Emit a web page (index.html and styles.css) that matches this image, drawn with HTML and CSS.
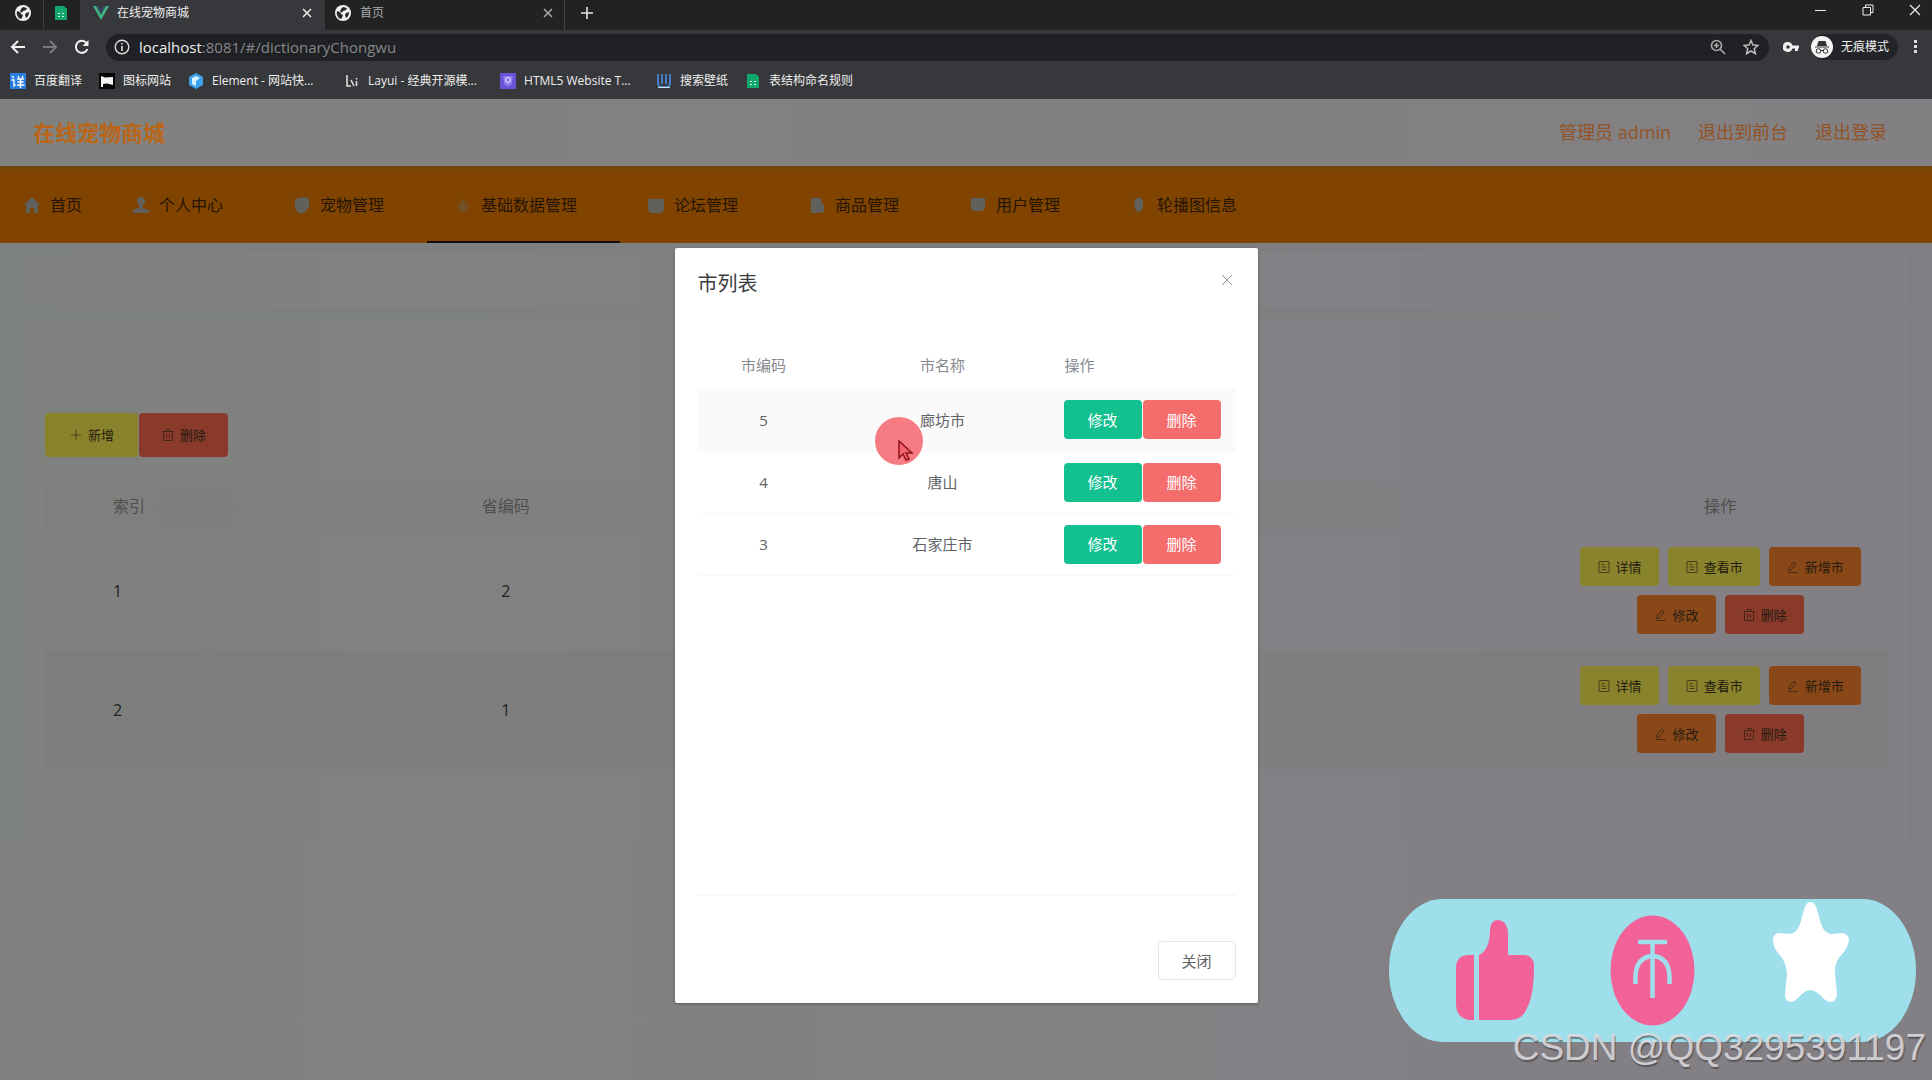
FILE: index.html
```html
<!DOCTYPE html>
<html lang="zh-CN">
<head>
<meta charset="utf-8">
<title>在线宠物商城</title>
<link rel="stylesheet" href="styles.css">
</head>
<body>
<svg class="defs" width="0" height="0" aria-hidden="true">
  <symbol id="globe" viewBox="0 0 16 16"><circle cx="8" cy="8" r="8" fill="#f1f1f1"/><path d="M2 6l3 1 1 2 2 1-1 3-2 1C3 12 1 10 2 6zM8 2l4 1-1 2-3 1-1 2-2-2 1-2zM11 8l3-1c0 3-1 5-3 6l-1-3z" fill="#26282a"/></symbol>
  <symbol id="sheet" viewBox="0 0 16 16"><path d="M2 1h9l3 3v11H2z" fill="#12a76c"/><path d="M5 8h2v1H5zM9 8h2v1H9zM5 11h2v1H5zM9 11h2v1H9z" fill="#d9f5e8"/></symbol>
  <symbol id="cross" viewBox="0 0 10 10"><path d="M1 1l8 8M9 1L1 9" fill="none" stroke="currentColor" stroke-width="1.5"/></symbol>
  <symbol id="thin-cross" viewBox="0 0 12 12"><path d="M1 1l10 10M11 1L1 11" fill="none" stroke="currentColor"/></symbol>
  <symbol id="doc" viewBox="0 0 14 14"><path d="M2 1.500h10v11H2zM4.500 4.500h3M4.500 7h5M4.500 9.500h5" fill="none" stroke="currentColor"/></symbol>
  <symbol id="pen" viewBox="0 0 14 14"><path d="M3 8l5-6 2 2-5 6-2.500.5zM2 12.500h10" fill="none" stroke="currentColor"/></symbol>
  <symbol id="trash" viewBox="0 0 14 14"><path d="M1 3.500h12M5 3V1.500h4V3M2.500 3.500v9h9v-9M5.500 6v4M8.500 6v4" fill="none" stroke="currentColor"/></symbol>
  <symbol id="plus" viewBox="0 0 14 14"><path d="M7 2v10M2 7h10" fill="none" stroke="currentColor"/></symbol>
</svg>

<header class="browser">
  <div class="tabs">
    <button class="tab pinned" aria-label="首页"><svg class="i16"><use href="#globe"/></svg></button>
    <button class="tab pinned second" aria-label="表格"><svg class="i16"><use href="#sheet"/></svg></button>
    <button class="tab active"><svg class="i16" viewBox="0 0 16 16"><path d="M0 1h3.200L8 9.500 12.800 1H16L8 15z" fill="#41b883"/><path d="M3.200 1H6l2 3.500L10 1h2.800L8 9.500z" fill="#35495e"/></svg><span>在线宠物商城</span><svg class="x"><use href="#cross"/></svg></button>
    <button class="tab idle"><svg class="i16"><use href="#globe"/></svg><span>首页</span><svg class="x"><use href="#cross"/></svg></button>
    <button class="tab new" aria-label="新标签页"><svg viewBox="0 0 12 12" width="12" height="12"><path d="M6 0v12M0 6h12" stroke="#e4e4e4" stroke-width="1.600"/></svg></button>
    <div class="window-controls">
      <button aria-label="最小化"><svg viewBox="0 0 12 12" width="12" height="12"><path d="M0 6.500h11" stroke="#eee"/></svg></button>
      <button aria-label="还原"><svg viewBox="0 0 12 12" width="12" height="12"><path d="M1 3.500h7.500V11H1zM3.500 3.500v-2.500H11v7.500H8.500" fill="none" stroke="#eee"/></svg></button>
      <button aria-label="关闭窗口"><svg viewBox="0 0 12 12" width="12" height="12"><path d="M1 1l10 10M11 1L1 11" stroke="#eee" stroke-width="1.200"/></svg></button>
    </div>
  </div>
  <div class="toolbar">
    <button aria-label="后退"><svg viewBox="0 0 16 16" width="16" height="16"><path d="M15 8H2M8 2L2 8l6 6" fill="none" stroke="#f2f2f2" stroke-width="2"/></svg></button>
    <button aria-label="前进"><svg viewBox="0 0 16 16" width="16" height="16"><path d="M1 8h13M8 2l6 6-6 6" fill="none" stroke="#77797b" stroke-width="2"/></svg></button>
    <button aria-label="刷新"><svg viewBox="0 0 16 16" width="16" height="16"><path d="M13.500 10A6 6 0 1 1 12.500 4" fill="none" stroke="#f2f2f2" stroke-width="2"/><path d="M14.500 1v6h-6z" fill="#f2f2f2"/></svg></button>
    <div class="omnibox">
      <svg viewBox="0 0 16 16" width="16" height="16"><circle cx="8" cy="8" r="6.800" fill="none" stroke="#ddd" stroke-width="1.400"/><path d="M8 7v5M8 4v1.600" stroke="#ddd" stroke-width="1.600"/></svg>
      <span class="url"><b>localhost</b>:8081/#/dictionaryChongwu</span>
      <svg viewBox="0 0 16 16" width="16" height="16"><circle cx="6.500" cy="6.500" r="5" fill="none" stroke="#aaa" stroke-width="1.600"/><path d="M10 10l5 5M4 6.500h5M6.500 4v5" stroke="#aaa" stroke-width="1.600"/></svg>
      <svg viewBox="0 0 16 16" width="16" height="16"><path d="M8 1.500l2 4.600 5 .4-3.800 3.300 1.200 4.900L8 12l-4.400 2.700 1.200-4.900L1 6.500l5-.4z" fill="none" stroke="#bbb" stroke-width="1.500"/></svg>
    </div>
    <svg class="key" viewBox="0 0 16 10" width="16" height="10"><path d="M5 0a5 5 0 1 0 4.500 6.500H12V9h3V6.500h1v-3H9.500A5 5 0 0 0 5 0zm0 3.200a1.800 1.800 0 1 1 0 3.600 1.800 1.800 0 0 1 0-3.600z" fill="#eee" fill-rule="evenodd"/></svg>
    <div class="incognito"><svg viewBox="0 0 22 22" width="22" height="22"><circle cx="11" cy="11" r="11" fill="#f4f4f4"/><path d="M7.500 5h7l1.500 5H6zM4 10.500h14v1H4z" fill="#333"/><g fill="none" stroke="#333"><circle cx="7.500" cy="15" r="2.300"/><circle cx="14.500" cy="15" r="2.300"/><path d="M10 14.500h2"/></g></svg><span>无痕模式</span></div>
    <button class="more" aria-label="更多"><svg viewBox="0 0 4 14" width="4" height="14"><path d="M0 0h3v3H0zM0 5h3v3H0zM0 10h3v3H0z" fill="#ddd"/></svg></button>
  </div>
  <nav class="bookmarks">
    <a href="#"><svg class="i16" viewBox="0 0 16 16"><path d="M0 0h16v16H0z" fill="#2a7de1"/><path d="M2 3l2 2M1.500 7h2.500v6l1.500-1.500M8 3l1 2M13 3l-1 2M7 6h7M7.500 9h6M7 12h7.500M10.500 6v9" fill="none" stroke="#fff" stroke-width="1.300"/></svg><span>百度翻译</span></a>
    <a href="#"><svg class="i16" viewBox="0 0 16 16"><path d="M0 0h16v16H0z" fill="#060606"/><path d="M2 3l4 1.500L14 4v8l-6-1.500-4 .5v3H2z" fill="#f5f5f5"/></svg><span>图标网站</span></a>
    <a href="#"><svg class="i16" viewBox="0 0 16 16"><path d="M8 0l7 4v8l-7 4-7-4V4z" fill="#3ba2ee"/><path d="M4 5l4-2 4 2-4 3v5l-4-2z" fill="#d9f0ff"/></svg><span class="long">Element - 网站快...</span></a>
    <a href="#"><svg class="i16" viewBox="0 0 16 16"><path d="M3 2v11h4M7 7l3 6M12.500 8v5M12.500 5v1.500" fill="none" stroke="#ddd" stroke-width="1.600"/></svg><span class="long">Layui - 经典开源模...</span></a>
    <a href="#"><svg class="i16" viewBox="0 0 16 16"><path d="M0 0h16v16H0z" fill="#6a52d9"/><path d="M3 3h10l-1 8-4 3-4-3z" fill="#8d7bf0"/><circle cx="8" cy="7" r="2.500" fill="none" stroke="#e6e0ff"/></svg><span class="long">HTML5 Website T...</span></a>
    <a href="#"><svg class="i16" viewBox="0 0 16 16"><path d="M2 1v9q0 4 4 4h4q4 0 4-4V1M6 1v10M10 1v10" fill="none" stroke="#4a86d8" stroke-width="1.800"/><path d="M2 14.500h12" stroke="#cfe0f5"/></svg><span>搜索壁纸</span></a>
    <a href="#"><svg class="i16"><use href="#sheet"/></svg><span>表结构命名规则</span></a>
  </nav>
</header>

<div class="app">
  <header class="site-head">
    <h1>在线宠物商城</h1>
    <div class="account"><span>管理员 admin</span><a href="#">退出到前台</a><a href="#">退出登录</a></div>
  </header>
  <nav class="menu">
    <a class="first" href="#"><svg viewBox="0 0 18 18"><path d="M9 1l8 8h-2v8h-4v-5H7v5H3V9H1z"/></svg>首页</a>
    <a href="#"><svg viewBox="0 0 18 18"><circle cx="9" cy="5" r="4"/><path d="M7 9h4v3l6 2v3H1v-3l6-2z"/></svg>个人中心</a>
    <a href="#"><svg viewBox="0 0 18 18"><path d="M2 3q7-3 14-1v9l-5 6H6l-4-4z"/></svg>宠物管理</a>
    <a class="current" href="#"><svg viewBox="0 0 18 18"><path d="M9 2l6 9-3 5H6l-3-5z" opacity=".4"/></svg>基础数据管理</a>
    <a href="#"><svg viewBox="0 0 18 18"><path d="M1 3h16v12h-3l2 2H3l-2-3z"/></svg>论坛管理</a>
    <a href="#"><svg viewBox="0 0 18 18"><path d="M3 2h10v4l3 3v7l-4 1H3z"/></svg>商品管理</a>
    <a href="#"><svg viewBox="0 0 18 18"><path d="M2 2h14v10l-3 3H4l-2-2z"/></svg>用户管理</a>
    <a href="#"><svg viewBox="0 0 18 18"><path d="M4 4l5-3 4 3v8l-4 5-4-4z"/></svg>轮播图信息</a>
  </nav>
  <main>
    <section class="card crumb"></section>
    <section class="card content">
      <div class="actions"><button class="yellow"><svg><use href="#plus"/></svg>新增</button><button class="red"><svg><use href="#trash"/></svg>删除</button></div>
      <table class="data">
        <colgroup><col class="c1"><col class="c2"><col><col class="c4"></colgroup>
        <thead><tr><th class="idx">索引</th><th>省编码</th><th></th><th>操作</th></tr></thead>
        <tbody>
          <tr><td class="idx">1</td><td>2</td><td></td><td><div class="ops"><button class="yellow"><svg><use href="#doc"/></svg>详情</button><button class="yellow"><svg><use href="#doc"/></svg>查看市</button><button class="orange"><svg><use href="#pen"/></svg>新增市</button><button class="orange"><svg><use href="#pen"/></svg>修改</button><button class="red"><svg><use href="#trash"/></svg>删除</button></div></td></tr>
          <tr><td class="idx">2</td><td>1</td><td></td><td><div class="ops"><button class="yellow"><svg><use href="#doc"/></svg>详情</button><button class="yellow"><svg><use href="#doc"/></svg>查看市</button><button class="orange"><svg><use href="#pen"/></svg>新增市</button><button class="orange"><svg><use href="#pen"/></svg>修改</button><button class="red"><svg><use href="#trash"/></svg>删除</button></div></td></tr>
        </tbody>
      </table>
    </section>
  </main>

  <div class="overlay">
    <div class="dialog" role="dialog" aria-labelledby="dlg-title">
      <div class="dialog-head"><h2 id="dlg-title">市列表</h2><button aria-label="关闭"><svg width="12" height="12"><use href="#thin-cross"/></svg></button></div>
      <div class="dialog-body">
        <table class="cities">
          <colgroup><col class="d1"><col><col class="d3"></colgroup>
          <thead><tr><th>市编码</th><th>市名称</th><th class="left">操作</th></tr></thead>
          <tbody>
            <tr class="hover"><td>5</td><td>廊坊市</td><td><div class="pair"><button class="green">修改</button><button class="pink">删除</button></div></td></tr>
            <tr><td>4</td><td>唐山</td><td><div class="pair"><button class="green">修改</button><button class="pink">删除</button></div></td></tr>
            <tr><td>3</td><td>石家庄市</td><td><div class="pair"><button class="green">修改</button><button class="pink">删除</button></div></td></tr>
          </tbody>
        </table>
      </div>
      <div class="dialog-foot"><button>关闭</button></div>
      <svg class="pointer" viewBox="0 0 48 48"><circle cx="24" cy="24" r="24" fill="#f4646c" fill-opacity=".85"/><path d="M24 24v17l4-4 3 6 3-1-3-6h6z" fill="#f4646c" stroke="#8e1420" stroke-width="1.500"/></svg>
    </div>
  </div>
</div>

<div class="badge">
  <svg viewBox="0 0 527 143">
    <g fill="#f26197">
      <path d="M85 56v65H79Q67 118 67 105V69Q67 57 79 56z"/>
      <path d="M90 56Q101 51 101 30Q102 21 109 21Q119 22 119 36V56H136Q145 57 145 67Q145 96 138 109Q133 121 121 121H90z"/>
      <ellipse cx="263.500" cy="71.500" rx="42" ry="55"/>
    </g>
    <path d="M249 43h29M263.500 43v56M246.500 85V77q1-19 17-20q16 1 17 20v8" fill="none" stroke="#9fdfec" stroke-width="4.500"/>
    <path d="M421.500 3Q426 3 428 11L432 25Q435 34 442 35L454 34Q460 36 460 41Q459 48 454 54Q445 63 446 74L448 95Q447 103 442 103Q438 103 434 99Q427 91 421.500 91Q416 91 409 99Q405 103 401 103Q396 102 396 95L398 76Q398 63 389 54Q384 48 384 41Q384 35 390 34L401 35Q408 34 411 25L415 11Q417 3 421.500 3z" fill="#fff"/>
  </svg>
</div>
<div class="watermark">CSDN @QQ3295391197</div>
</body>
</html>
```
FILE: styles.css
```css
* { box-sizing: border-box; }
body {
  margin: 0;
  min-height: 100vh;
  display: flex;
  flex-direction: column;
  position: relative;
  overflow: hidden;
  background: linear-gradient(90deg, #80827f, #838085 80%);
  font: 16px/20px "Open Sans", "Noto Sans CJK SC", sans-serif;
}
button { font: inherit; color: inherit; border: 0; background: none; padding: 0; margin: 0; }
a { color: inherit; text-decoration: none; }
h1, h2 { margin: 0; }
svg { flex: none; display: block; }
.defs { position: absolute; }
.i16 { width: 16px; height: 16px; }

/* browser frame */
.browser { background: #37383b; color: #eee; font-size: 12px; line-height: 18px; height: 99px; }
.tabs { display: flex; height: 30px; background: #202322; align-items: stretch; }
.tab { display: flex; align-items: center; padding-bottom: 5px; }
.tab .x { width: 10px; height: 10px; margin-left: auto; }
.pinned { width: 44px; padding-left: 15px; border-right: 1px solid #3c3e3e; }
.pinned.second { width: 36px; padding-left: 9px; border: 0; }
.active { width: 245px; background: #37383b; padding-left: 13px; padding-right: 13px; gap: 8px; }
.idle { width: 240px; padding-left: 10px; padding-right: 11px; gap: 9px; color: #aaa; border-right: 1px solid #444; }
.new { padding-left: 16px; }
.window-controls { margin-left: auto; display: flex; gap: 35px; padding-right: 11px; align-items: center; padding-bottom: 10px; }
.toolbar { display: flex; align-items: center; height: 34px; padding: 0 14px 0 10px; gap: 16px; }
.omnibox { flex: 1; display: flex; align-items: center; height: 27px; border-radius: 14px; background: #1f2124; padding: 0 10px 0 8px; gap: 17px; }
.url { flex: 1; margin-left: -8px; font-size: 15px; color: #85878a; }
.url b { font-weight: 400; color: #eee; }
.key { margin-left: -2px; }
.incognito { display: flex; align-items: center; gap: 8px; background: #222427; border-radius: 13px; height: 26px; padding-right: 9px; margin-left: -4px; }
.bookmarks { display: flex; gap: 17px; padding: 0 10px; height: 34px; align-items: center; }
.bookmarks a { display: flex; gap: 8px; align-items: center; white-space: nowrap; }
.bookmarks .long { width: 115px; }

/* shop administration page */
.app { position: relative; flex: 1; }
.site-head { display: flex; align-items: center; justify-content: space-between; height: 67px; padding: 0 45px 2px 33px; background: linear-gradient(90deg, #80827f, #838083); }
.site-head h1 { font-size: 22px; line-height: 30px; color: #bb6517; }
.account { display: flex; gap: 27px; font-size: 18px; line-height: 26px; color: #925326; }
.menu { display: flex; height: 77px; background: #804400; color: #261405; border-top: 3px solid #724407; }
.menu a { display: flex; align-items: center; gap: 9px; padding: 0 43px 0 27px; border-bottom: 2px solid transparent; }
.menu svg { width: 18px; height: 18px; fill: #60615c; }
.menu .first { padding: 0 23px; }
.menu .current { border-color: #160b06; }
main { padding: 8px 24px 0; background: linear-gradient(90deg, #7c8080, #807e82); }
.card { background: linear-gradient(90deg, #80827f, #838085 80%); }
.crumb { height: 58px; margin-bottom: 10px; }
.content { padding: 94px 20px 71px 21px; }
.actions { display: flex; gap: 1px; margin-bottom: 24px; }
.actions button, .ops button { display: flex; align-items: center; justify-content: center; gap: 5px; border-radius: 4px; font-size: 13px; padding: 0 17px; color: #241c10; }
.actions svg, .ops svg { width: 14px; height: 14px; opacity: .65; }
.actions button { height: 44px; padding: 0 22px; }
.actions .yellow { padding: 0 24px; }
.yellow { background: #8a832d; }
.orange { background: #8a4818; }
.red { background: #893a2b; }
.data { width: 100%; border-collapse: collapse; table-layout: fixed; text-align: center; color: #222; }
.data th { height: 50px; padding: 0 10px; font-weight: 400; color: #4d4e4e; background: rgba(122, 122, 122, .2); }
.data td { height: 119px; padding: 0 10px; }
.data .idx { text-align: left; padding-left: 68px; }
.data tbody tr:last-child { background: rgba(120, 120, 120, .3); }
.c1 { width: 14%; }
.c2 { width: 22%; }
.c4 { width: 18%; }
.data th:last-child, .data td:last-child { padding: 0 14px 0 10px; }
.ops { display: flex; flex-wrap: wrap; justify-content: center; gap: 9px; }
.ops button { height: 39px; }

/* dialog */
.overlay { position: absolute; top: 149px; left: 0; right: 0; display: flex; justify-content: center; }
.dialog { position: relative; width: 583px; background: #fff; border-radius: 2px; box-shadow: 0 1px 3px rgba(0, 0, 0, .3); color: #606266; }
.dialog-head { display: flex; justify-content: space-between; padding: 22px 25px 0 23px; color: #3c3d40; }
.dialog-head h2 { font-size: 20px; line-height: 28px; font-weight: 400; }
.dialog-head button { color: #909399; height: 20px; }
.dialog-body { margin: 43px 22px 0; min-height: 555px; border-bottom: 2px solid #f8f8f8; }
.cities { width: 100%; border-collapse: collapse; table-layout: fixed; text-align: center; font-size: 15px; }
.cities th { height: 48px; font-weight: 400; color: #85888e; padding: 0; }
.cities td { height: 62px; padding: 0; border-bottom: 1px solid #f8f8f9; }
.cities th.left { text-align: left; padding: 0 10px; }
.cities .hover { background: #fafafa; }
.d1 { width: 134px; }
.d3 { width: 181px; }
.pair { display: flex; gap: 1px; padding-left: 9px; }
.pair button { width: 78px; height: 39px; border-radius: 4px; color: #fff; }
.green { background: #13c090; }
.pink { background: #f56c6c; }
.dialog-foot { display: flex; justify-content: flex-end; padding: 45px 22px 23px; }
.dialog-foot button { width: 78px; height: 39px; border: 1px solid #e6e7ea; border-radius: 4px; font-size: 15px; }
.pointer { position: absolute; left: 200px; top: 169px; width: 48px; height: 48px; }

/* floating sticker and watermark */
.badge { position: absolute; right: 16px; bottom: 38px; width: 527px; height: 143px; border-radius: 54px / 72px; background: #9fdfec; }
.watermark { position: absolute; right: 6px; bottom: 11px; font: 37px/42px "Liberation Sans", sans-serif; color: rgba(225, 222, 226, .85); text-shadow: 1px 2px 1px rgba(60, 60, 60, .6); }
```
